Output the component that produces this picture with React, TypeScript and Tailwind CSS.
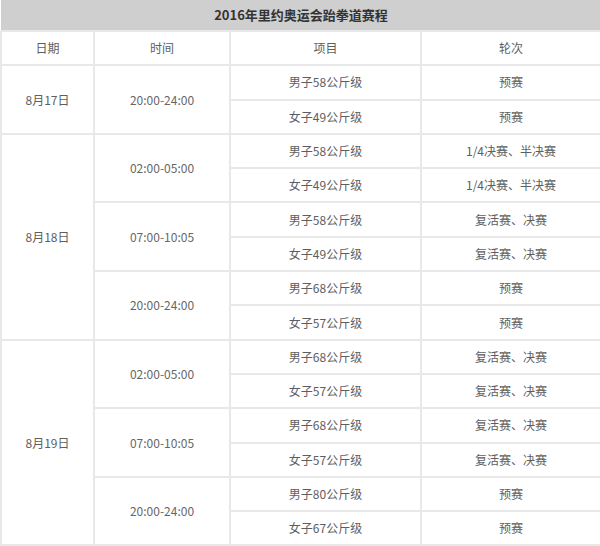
type Slot = { time: string; events: [string, string][] };
type Day = { date: string; slots: Slot[] };

const schedule: Day[] = [
  {
    date: '8月17日',
    slots: [
      {
        time: '20:00-24:00',
        events: [
          ['男子58公斤级', '预赛'],
          ['女子49公斤级', '预赛'],
        ],
      },
    ],
  },
  {
    date: '8月18日',
    slots: [
      {
        time: '02:00-05:00',
        events: [
          ['男子58公斤级', '1/4决赛、半决赛'],
          ['女子49公斤级', '1/4决赛、半决赛'],
        ],
      },
      {
        time: '07:00-10:05',
        events: [
          ['男子58公斤级', '复活赛、决赛'],
          ['女子49公斤级', '复活赛、决赛'],
        ],
      },
      {
        time: '20:00-24:00',
        events: [
          ['男子68公斤级', '预赛'],
          ['女子57公斤级', '预赛'],
        ],
      },
    ],
  },
  {
    date: '8月19日',
    slots: [
      {
        time: '02:00-05:00',
        events: [
          ['男子68公斤级', '复活赛、决赛'],
          ['女子57公斤级', '复活赛、决赛'],
        ],
      },
      {
        time: '07:00-10:05',
        events: [
          ['男子68公斤级', '复活赛、决赛'],
          ['女子57公斤级', '复活赛、决赛'],
        ],
      },
      {
        time: '20:00-24:00',
        events: [
          ['男子80公斤级', '预赛'],
          ['女子67公斤级', '预赛'],
        ],
      },
    ],
  },
];

const cell = 'border-2 border-[#e8e8e8] h-[34.3px] p-0 text-center align-middle';

export default function App() {
  return (
    <div
      className="w-[600px] h-[546px] overflow-hidden bg-white text-[12px] text-[#5e5e5e]"
      style={{ fontFamily: '"Noto Sans CJK SC", "Noto Sans", sans-serif' }}
    >
      <table className="w-[600px] table-fixed border-collapse">
        <colgroup>
          <col className="w-[93px]" />
          <col className="w-[136px]" />
          <col className="w-[191px]" />
          <col className="w-[180px]" />
        </colgroup>
        <thead>
          <tr>
            <th colSpan={4} className="h-[31px] p-0 bg-[#cfcfcf] text-[13px] font-bold text-[#333] text-center">
              2016年里约奥运会跆拳道赛程
            </th>
          </tr>
          <tr>
            <th className={`${cell} font-normal h-[33px]`}>日期</th>
            <th className={`${cell} font-normal h-[33px]`}>时间</th>
            <th className={`${cell} font-normal h-[33px]`}>项目</th>
            <th className={`${cell} font-normal h-[33px]`}>轮次</th>
          </tr>
        </thead>
        <tbody>
          {schedule.map((day) =>
            day.slots.map((slot, si) =>
              slot.events.map(([event, round], ei) => (
                <tr key={`${day.date}-${si}-${ei}`}>
                  {si === 0 && ei === 0 && (
                    <td rowSpan={day.slots.length * 2} className={cell}>
                      {day.date}
                    </td>
                  )}
                  {ei === 0 && (
                    <td rowSpan={2} className={`${cell} text-[#666]`}>
                      {slot.time}
                    </td>
                  )}
                  <td className={cell}>{event}</td>
                  <td className={cell}>{round}</td>
                </tr>
              ))
            )
          )}
        </tbody>
      </table>
    </div>
  );
}
